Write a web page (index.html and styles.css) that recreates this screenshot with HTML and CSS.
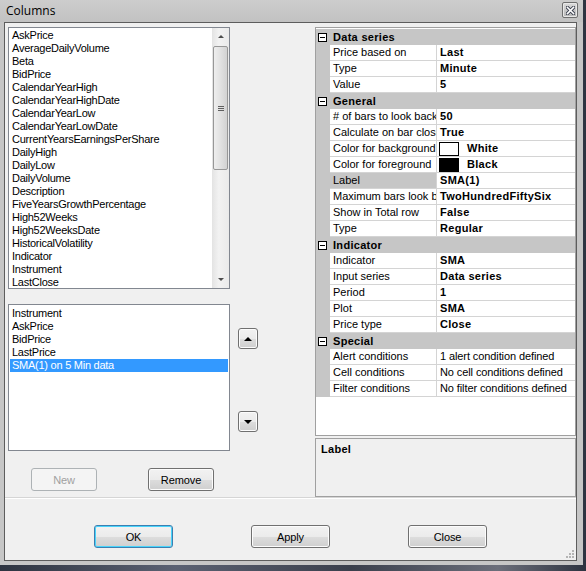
FILE: index.html
```html
<!DOCTYPE html>
<html lang="en">
<head>
	<meta charset="UTF-8">
	<title>Columns</title>
	<link rel="stylesheet" href="styles.css">
</head>
<body>
	<div class="window">
		<div class="titlebar">
			<span class="title">Columns</span>
			<span class="close">
				<svg width="9" height="9" viewBox="0 0 9 9">
					<path d="M1.5 1.5 L7.5 7.5 M7.5 1.5 L1.5 7.5" stroke="#3c4150" stroke-width="3.4" stroke-linecap="square"/>
					<path d="M1.5 1.5 L7.5 7.5 M7.5 1.5 L1.5 7.5" stroke="#fff" stroke-width="1.6" stroke-linecap="square"/>
				</svg>
			</span>
		</div>
		<div class="client">
			<div class="main">
				<div class="left">
					<div class="listbox available">
						<ul class="items">
							<li>AskPrice</li>
							<li>AverageDailyVolume</li>
							<li>Beta</li>
							<li>BidPrice</li>
							<li>CalendarYearHigh</li>
							<li>CalendarYearHighDate</li>
							<li>CalendarYearLow</li>
							<li>CalendarYearLowDate</li>
							<li>CurrentYearsEarningsPerShare</li>
							<li>DailyHigh</li>
							<li>DailyLow</li>
							<li>DailyVolume</li>
							<li>Description</li>
							<li>FiveYearsGrowthPercentage</li>
							<li>High52Weeks</li>
							<li>High52WeeksDate</li>
							<li>HistoricalVolatility</li>
							<li>Indicator</li>
							<li>Instrument</li>
							<li>LastClose</li>
						</ul>
						<div class="vscroll">
							<span class="sb-btn"><i class="tri-up small"></i></span>
							<span class="sb-track">
								<span class="sb-thumb"><i class="grip"></i></span>
							</span>
							<span class="sb-btn"><i class="tri-down small"></i></span>
						</div>
					</div>
					<ul class="listbox chosen">
						<li>Instrument</li>
						<li>AskPrice</li>
						<li>BidPrice</li>
						<li>LastPrice</li>
						<li class="selected">SMA(1) on 5 Min data</li>
					</ul>
					<div class="left-buttons">
						<button class="btn" type="button" disabled>New</button>
						<button class="btn" type="button">Remove</button>
					</div>
				</div>
				<div class="movers">
					<button class="btn arrow" type="button"><i class="tri-up"></i></button>
					<button class="btn arrow down" type="button"><i class="tri-down"></i></button>
				</div>
				<div class="right">
					<div class="propgrid">
						<div class="cat"><i class="minus"></i>Data series</div>
						<div class="row"><span class="name">Price based on</span><span class="val">Last</span></div>
						<div class="row"><span class="name">Type</span><span class="val">Minute</span></div>
						<div class="row"><span class="name">Value</span><span class="val">5</span></div>
						<div class="cat"><i class="minus"></i>General</div>
						<div class="row"><span class="name"># of bars to look back</span><span class="val">50</span></div>
						<div class="row"><span class="name">Calculate on bar close</span><span class="val">True</span></div>
						<div class="row"><span class="name">Color for background</span><span class="val"><i class="swatch"></i>White</span></div>
						<div class="row"><span class="name">Color for foreground</span><span class="val"><i class="swatch black"></i>Black</span></div>
						<div class="row active"><span class="name">Label</span><span class="val">SMA(1)</span></div>
						<div class="row"><span class="name">Maximum bars look back</span><span class="val">TwoHundredFiftySix</span></div>
						<div class="row"><span class="name">Show in Total row</span><span class="val">False</span></div>
						<div class="row"><span class="name">Type</span><span class="val">Regular</span></div>
						<div class="cat"><i class="minus"></i>Indicator</div>
						<div class="row"><span class="name">Indicator</span><span class="val">SMA</span></div>
						<div class="row"><span class="name">Input series</span><span class="val">Data series</span></div>
						<div class="row"><span class="name">Period</span><span class="val">1</span></div>
						<div class="row"><span class="name">Plot</span><span class="val">SMA</span></div>
						<div class="row"><span class="name">Price type</span><span class="val">Close</span></div>
						<div class="cat"><i class="minus"></i>Special</div>
						<div class="row"><span class="name">Alert conditions</span><span class="val plain">1 alert condition defined</span></div>
						<div class="row"><span class="name">Cell conditions</span><span class="val plain">No cell conditions defined</span></div>
						<div class="row"><span class="name">Filter conditions</span><span class="val plain">No filter conditions defined</span></div>
					</div>
					<div class="desc"><b>Label</b></div>
				</div>
			</div>
			<div class="footer">
				<button class="btn wide default" type="button">OK</button>
				<button class="btn wide" type="button">Apply</button>
				<button class="btn wide" type="button">Close</button>
				<svg class="grip-corner" width="8" height="8" viewBox="0 0 8 8">
					<rect x="6" y="0" width="2" height="2" fill="#b4b4b4"/>
					<rect x="3" y="3" width="2" height="2" fill="#b4b4b4"/>
					<rect x="6" y="3" width="2" height="2" fill="#b4b4b4"/>
					<rect x="0" y="6" width="2" height="2" fill="#b4b4b4"/>
					<rect x="3" y="6" width="2" height="2" fill="#b4b4b4"/>
					<rect x="6" y="6" width="2" height="2" fill="#b4b4b4"/>
				</svg>
			</div>
		</div>
	</div>
</body>
</html>
```

FILE: styles.css
```css
body {
	margin: 0;
	width: 586px;
	height: 571px;
	overflow: hidden;
	background: linear-gradient(90deg, #2d3340, #5b6172 30%, #3a3f4c 60%, #6b6e7a 85%, #2d3340);
	font-family: "Liberation Sans", Arial, sans-serif;
	font-size: 11px;
	letter-spacing: -0.25px;
	color: #000;
}

ul,
li {
	margin: 0;
	padding: 0;
	list-style: none;
}

.window {
	display: flex;
	flex-direction: column;
	width: 583px;
	height: 565px;
	background: #c6c6c6;
}

.titlebar {
	display: flex;
	align-items: center;
	justify-content: space-between;
	height: 22px;
	padding: 0 5px 0 6px;
	background: linear-gradient(#cdcdcd, #c2c2c2);
}
.title {
	font-family: "Open Sans", "Noto Sans", sans-serif;
	font-size: 12px;
	letter-spacing: 0;
	margin-top: -1px;
}
.close {
	display: flex;
	align-items: center;
	justify-content: center;
	width: 14px;
	height: 14px;
	margin-top: -2px;
	border: 1px solid #6f6f6f;
	border-radius: 2px;
	background: linear-gradient(#dadada, #b8b8b8);
	box-shadow: inset 0 0 0 1px #e8e8e8;
}

.client {
	display: flex;
	flex-direction: column;
	flex: 1;
	margin: 0 6px 4px 4px;
	border: 1px solid #5d5d5d;
	background: #f0f0f0;
}

.main {
	display: flex;
	height: 470px;
	padding: 4px 0 0 3px;
}

.left {
	display: flex;
	flex-direction: column;
	flex: none;
	width: 222px;
}

.listbox {
	box-sizing: border-box;
	border: 1px solid #828790;
	background: #fff;
}
.listbox li {
	height: 13px;
	line-height: 13px;
	padding-left: 3px;
	white-space: nowrap;
}
.available {
	display: flex;
	height: 262px;
}
.available .items {
	flex: 1;
	padding-top: 1px;
	overflow: hidden;
}
.chosen {
	height: 147px;
	margin-top: 15px;
	padding: 2px 1px;
}
.chosen li {
	padding-left: 2px;
}
.chosen .selected {
	background: #3399ff;
	color: #fff;
}

.vscroll {
	display: flex;
	flex-direction: column;
	width: 17px;
	background: linear-gradient(90deg, #e3e3e3, #f2f2f2 40%, #eaeaea);
}
.sb-btn {
	display: flex;
	align-items: center;
	justify-content: center;
	height: 17px;
}
.sb-track {
	flex: 1;
}
.sb-thumb {
	display: flex;
	align-items: center;
	justify-content: center;
	box-sizing: border-box;
	height: 124px;
	margin: 1px 0 0 1px;
	width: 15px;
	border: 1px solid #979797;
	border-radius: 2px;
	background: linear-gradient(90deg, #eeeeee, #e1e1e1 50%, #d2d2d2);
}
.grip {
	width: 6px;
	height: 5px;
	background: repeating-linear-gradient(#5f5f5f 0 1px, transparent 1px 2px);
}

.tri-up,
.tri-down {
	width: 0;
	height: 0;
	border-left: 4px solid transparent;
	border-right: 4px solid transparent;
}
.tri-up {
	border-bottom: 4px solid #000;
}
.tri-down {
	border-top: 4px solid #000;
}
.tri-up.small {
	border-bottom-color: #4d4d4d;
	border-width: 0 3px 3px;
}
.tri-down.small {
	border-top-color: #4d4d4d;
	border-width: 3px 3px 0;
}

.btn {
	box-sizing: border-box;
	display: flex;
	align-items: center;
	justify-content: center;
	width: 66px;
	height: 23px;
	padding: 0;
	border: 1px solid #707070;
	border-radius: 3px;
	background: linear-gradient(#f2f2f2, #ebebeb 50%, #dddddd 51%, #cfcfcf);
	box-shadow: inset 0 0 0 1px #fcfcfc;
	font-family: "Liberation Sans", Arial, sans-serif;
	font-size: 11px;
	letter-spacing: -0.1px;
	color: #000;
}
.btn:disabled {
	border-color: #adb2b5;
	background: #f4f4f4;
	box-shadow: none;
	color: #a0a0a0;
}

.left-buttons {
	display: flex;
	gap: 51px;
	margin: 17px 0 0 23px;
}

.movers {
	box-sizing: border-box;
	display: flex;
	flex-direction: column;
	flex: none;
	width: 85px;
	padding: 301px 0 0 8px;
}
.arrow {
	width: 20px;
	height: 21px;
}
.arrow.down {
	margin-top: 62px;
}

.right {
	display: flex;
	flex-direction: column;
	flex: none;
	width: 261px;
}
.propgrid {
	box-sizing: border-box;
	height: 409px;
	padding-top: 1px;
	border: 1px solid #a0a0a0;
	background: #fff;
}
.cat {
	display: flex;
	align-items: center;
	height: 16px;
	background: #c6c6c6;
	font-weight: bold;
	letter-spacing: 0.3px;
}
.minus {
	position: relative;
	box-sizing: border-box;
	width: 9px;
	height: 9px;
	margin: 0 6px 0 2px;
	border: 1px solid #000;
	background: #fff;
}
.minus::after {
	content: "";
	position: absolute;
	left: 1px;
	top: 3px;
	width: 5px;
	height: 1px;
	background: #000;
}
.row {
	display: flex;
	height: 16px;
	padding-left: 14px;
	background: #c6c6c6;
}
.row span {
	box-sizing: border-box;
	height: 16px;
	line-height: 15px;
	padding-left: 3px;
	border-bottom: 1px solid #d4d4d4;
	background: #fff;
	white-space: nowrap;
	overflow: hidden;
}
.row .name {
	flex: none;
	width: 107px;
	border-right: 1px solid #d4d4d4;
	letter-spacing: 0;
}
.row .val {
	display: flex;
	align-items: center;
	flex: 1;
	font-weight: bold;
	letter-spacing: 0.3px;
}
.row .plain {
	font-weight: normal;
	letter-spacing: -0.1px;
}
.row.active .name {
	background: #c6c6c6;
}
.swatch {
	box-sizing: border-box;
	flex: none;
	width: 20px;
	height: 14px;
	margin: 0 8px 0 -1px;
	border: 1px solid #000;
	background: #fff;
}
.swatch.black {
	background: #000;
}

.desc {
	box-sizing: border-box;
	height: 59px;
	margin-top: 2px;
	padding: 4px 5px;
	border: 1px solid #a0a0a0;
	background: #f0f0f0;
	letter-spacing: 0.3px;
}

.footer {
	position: relative;
	display: flex;
	flex: 1;
	gap: 78px;
	justify-content: center;
	padding-top: 27px;
	border-top: 1px solid #d5d5d5;
	box-shadow: inset 0 1px 0 #fff;
}
.btn.wide {
	width: 79px;
	height: 23px;
}
.btn.default {
	border-color: #3c7fb1;
	box-shadow: inset 0 0 0 1px #48d4fb;
}
.grip-corner {
	position: absolute;
	right: 2px;
	bottom: 2px;
}
```
